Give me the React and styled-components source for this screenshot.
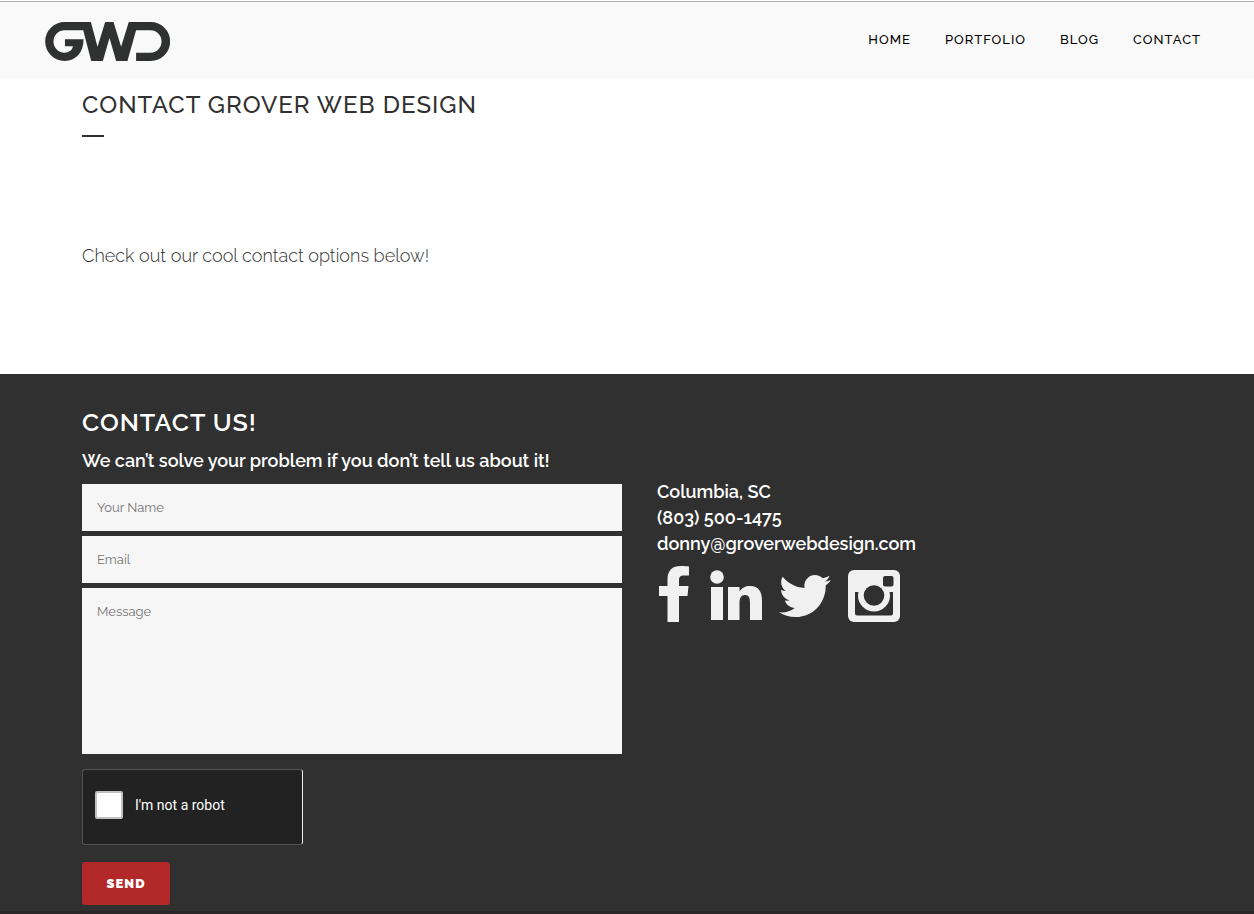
import styled, { createGlobalStyle } from 'styled-components';
import { FaTwitter } from 'react-icons/fa';

const GlobalStyle = createGlobalStyle`
  * {
    box-sizing: border-box;
    margin: 0;
    padding: 0;
  }
  body {
    background-color: #fff;
    color: #303030;
    font-family: Raleway, Lato, sans-serif;
    font-size: 18px;
    line-height: 26px;
  }
  a {
    color: inherit;
    text-decoration: none;
  }
`;

const Header = styled.header`
  display: flex;
  justify-content: space-between;
  align-items: center;
  height: 77px;
  margin-top: 1px;
  padding: 4px 53px 0 45px;
  background-color: #f9f9f9;
  border-top: 1px solid #b0b0b0;
  border-bottom: 1px solid #f4f4f4;
`;

const LogoLink = styled.a`
  display: flex;
  & svg {
    width: 125px;
    height: 39px;
    fill: #303232;
  }
`;

const Nav = styled.nav`
  display: flex;
  gap: 34px;
  padding-bottom: 3px;
`;

const NavLink = styled.a`
  color: #000;
  font-size: 13px;
  font-weight: 500;
  letter-spacing: 1px;
  text-transform: uppercase;
`;

const Intro = styled.section`
  padding: 11px 82px 105px;
`;

const PageTitle = styled.h1`
  font-size: 24px;
  font-weight: 500;
  line-height: 32px;
  letter-spacing: 1px;
  text-transform: uppercase;
`;

const Separator = styled.hr`
  width: 22px;
  height: 2px;
  margin: 14px 0 106px;
  border: none;
  background-color: #303030;
`;

const IntroText = styled.p`
  font-weight: 300;
`;

const ContactSection = styled.section`
  padding: 32px 57px 6px 82px;
  background-color: #303030;
  color: #fff;
  border-bottom: 3px solid #2a2627;
`;

const SectionTitle = styled.h2`
  font-size: 25px;
  font-weight: 600;
  line-height: 32px;
  letter-spacing: 1px;
  text-transform: uppercase;
`;

const Lead = styled.p`
  margin: 10px 0;
  font-weight: 600;
`;

const Columns = styled.div`
  display: grid;
  grid-template-columns: 1fr 1fr;
  gap: 35px;
`;

const Form = styled.form`
  display: flex;
  flex-direction: column;
  align-items: flex-start;
  gap: 5px;
`;

const Field = styled.input`
  display: block;
  width: 100%;
  height: ${(props) => (props.as === 'textarea' ? '166px' : '47px')};
  padding: 15px;
  border: none;
  background-color: #f6f6f6;
  color: #303030;
  font-family: inherit;
  font-size: 13px;
  line-height: 17px;
  resize: none;
  &::placeholder {
    color: #777;
    opacity: 1;
  }
`;

const Captcha = styled.label`
  display: flex;
  align-items: center;
  gap: 12px;
  width: 221px;
  height: 76px;
  margin: 10px 0 12px;
  padding: 0 12px 4px;
  border: 1px solid #525252;
  border-right-color: #eee;
  border-radius: 3px;
  background-color: #222;
  font-family: Roboto, sans-serif;
  font-size: 14px;
  line-height: 28px;
`;

const Checkbox = styled.input`
  appearance: none;
  width: 28px;
  height: 28px;
  border: 2px solid #c1c1c1;
  border-radius: 2px;
  background-color: #fff;
  &:checked {
    background-color: #4a90e2;
  }
`;

const SendButton = styled.button`
  min-width: 88px;
  height: 43px;
  padding: 0 24px;
  border: none;
  border-radius: 3px;
  background-color: #b22727;
  color: #fff;
  font-family: inherit;
  font-size: 13px;
  font-weight: 900;
  letter-spacing: 1px;
  text-transform: uppercase;
  cursor: pointer;
`;

const Details = styled.address`
  display: flex;
  flex-direction: column;
  align-items: flex-start;
  margin-top: -5px;
  font-style: normal;
  font-weight: 600;
`;

const SocialLinks = styled.div`
  display: flex;
  align-items: flex-end;
  gap: 17px;
  padding: 9px 2px;
`;

const SocialLink = styled.a`
  display: flex;
  color: #f0f0f0;
`;

function Logo() {
  return (
    <svg viewBox="44 66 376 117" role="img" aria-label="GWD">
      <path d="M182 66H103a58.500 58.500 0 0 0 0 117c33 0 57-24 57-65h-56v21h24c-2 12-12 19-25 19a33 33 0 0 1 0-67h56l24 92h35l20-69 20 69h34l26-92h43a33 33 0 0 1 0 67h-43v25h44a58.500 58.500 0 0 0 0-117h-66l-23 74-23-74h-25l-23 74z" />
    </svg>
  );
}

function FacebookIcon() {
  return (
    <svg width="34" height="56" viewBox="0 0 34 56" fill="currentColor">
      <path d="M30 .5V9.500h-5c-4 0-5 1.500-5 5V20h9.500l-1 10H20v26H8.500V30H0V20h8.500v-7C8.500 4.500 13.500 0 21.500 0c4 0 7 .2 8.500.5z" />
    </svg>
  );
}

function LinkedinIcon() {
  return (
    <svg width="52" height="54" viewBox="0 0 52 54" fill="currentColor">
      <circle cx="7" cy="9" r="6.800" />
      <path d="M1 19h12v33H1zM18 19h11.500v4.500c2-3.500 6-5.500 10.500-5.500 9 0 12 6 12 15v19H40V35c0-5-1-8-5-8s-5.500 3-5.500 8v17H18z" />
    </svg>
  );
}

function InstagramIcon() {
  return (
    <svg width="52" height="52" viewBox="0 0 52 52" fill="currentColor">
      <rect width="52" height="52" rx="6" />
      <path d="M7 22h38v21.500a2 2 0 0 1-2 2H9a2 2 0 0 1-2-2z" fill="#303030" />
      <circle cx="26" cy="25.500" r="16" />
      <circle cx="26" cy="25.500" r="10.300" fill="#303030" />
      <rect x="35" y="6" width="10.500" height="10.500" rx="2" fill="#303030" />
    </svg>
  );
}

const navItems = ['Home', 'Portfolio', 'Blog', 'Contact'];

function ContactForm() {
  return (
    <Form onSubmit={(e) => e.preventDefault()}>
      <Field
        type="text"
        name="name"
        placeholder="Your Name"
        aria-label="Your Name"
      />
      <Field type="email" name="email" placeholder="Email" aria-label="Email" />
      <Field
        as="textarea"
        name="message"
        placeholder="Message"
        aria-label="Message"
      />
      <Captcha htmlFor="robot">
        <Checkbox type="checkbox" id="robot" />
        I'm not a robot
      </Captcha>
      <SendButton type="submit">Send</SendButton>
    </Form>
  );
}

function App() {
  return (
    <>
      <GlobalStyle />
      <Header>
        <LogoLink href="#home">
          <Logo />
        </LogoLink>
        <Nav>
          {navItems.map((item) => (
            <NavLink key={item} href={`#${item.toLowerCase()}`}>
              {item}
            </NavLink>
          ))}
        </Nav>
      </Header>
      <main>
        <Intro>
          <PageTitle>Contact Grover Web Design</PageTitle>
          <Separator />
          <IntroText>Check out our cool contact options below!</IntroText>
        </Intro>
        <ContactSection>
          <SectionTitle>Contact Us!</SectionTitle>
          <Lead>We can’t solve your problem if you don’t tell us about it!</Lead>
          <Columns>
            <ContactForm />
            <Details>
              <span>Columbia, SC</span>
              <a href="tel:8035001475">(803) 500-1475</a>
              <a href="mailto:donny@groverwebdesign.com">
                donny@groverwebdesign.com
              </a>
              <SocialLinks>
                <SocialLink href="#facebook" aria-label="Facebook">
                  <FacebookIcon />
                </SocialLink>
                <SocialLink href="#linkedin" aria-label="LinkedIn">
                  <LinkedinIcon />
                </SocialLink>
                <SocialLink href="#twitter" aria-label="Twitter">
                  <FaTwitter size={52} />
                </SocialLink>
                <SocialLink href="#instagram" aria-label="Instagram">
                  <InstagramIcon />
                </SocialLink>
              </SocialLinks>
            </Details>
          </Columns>
        </ContactSection>
      </main>
    </>
  );
}

export default App;
